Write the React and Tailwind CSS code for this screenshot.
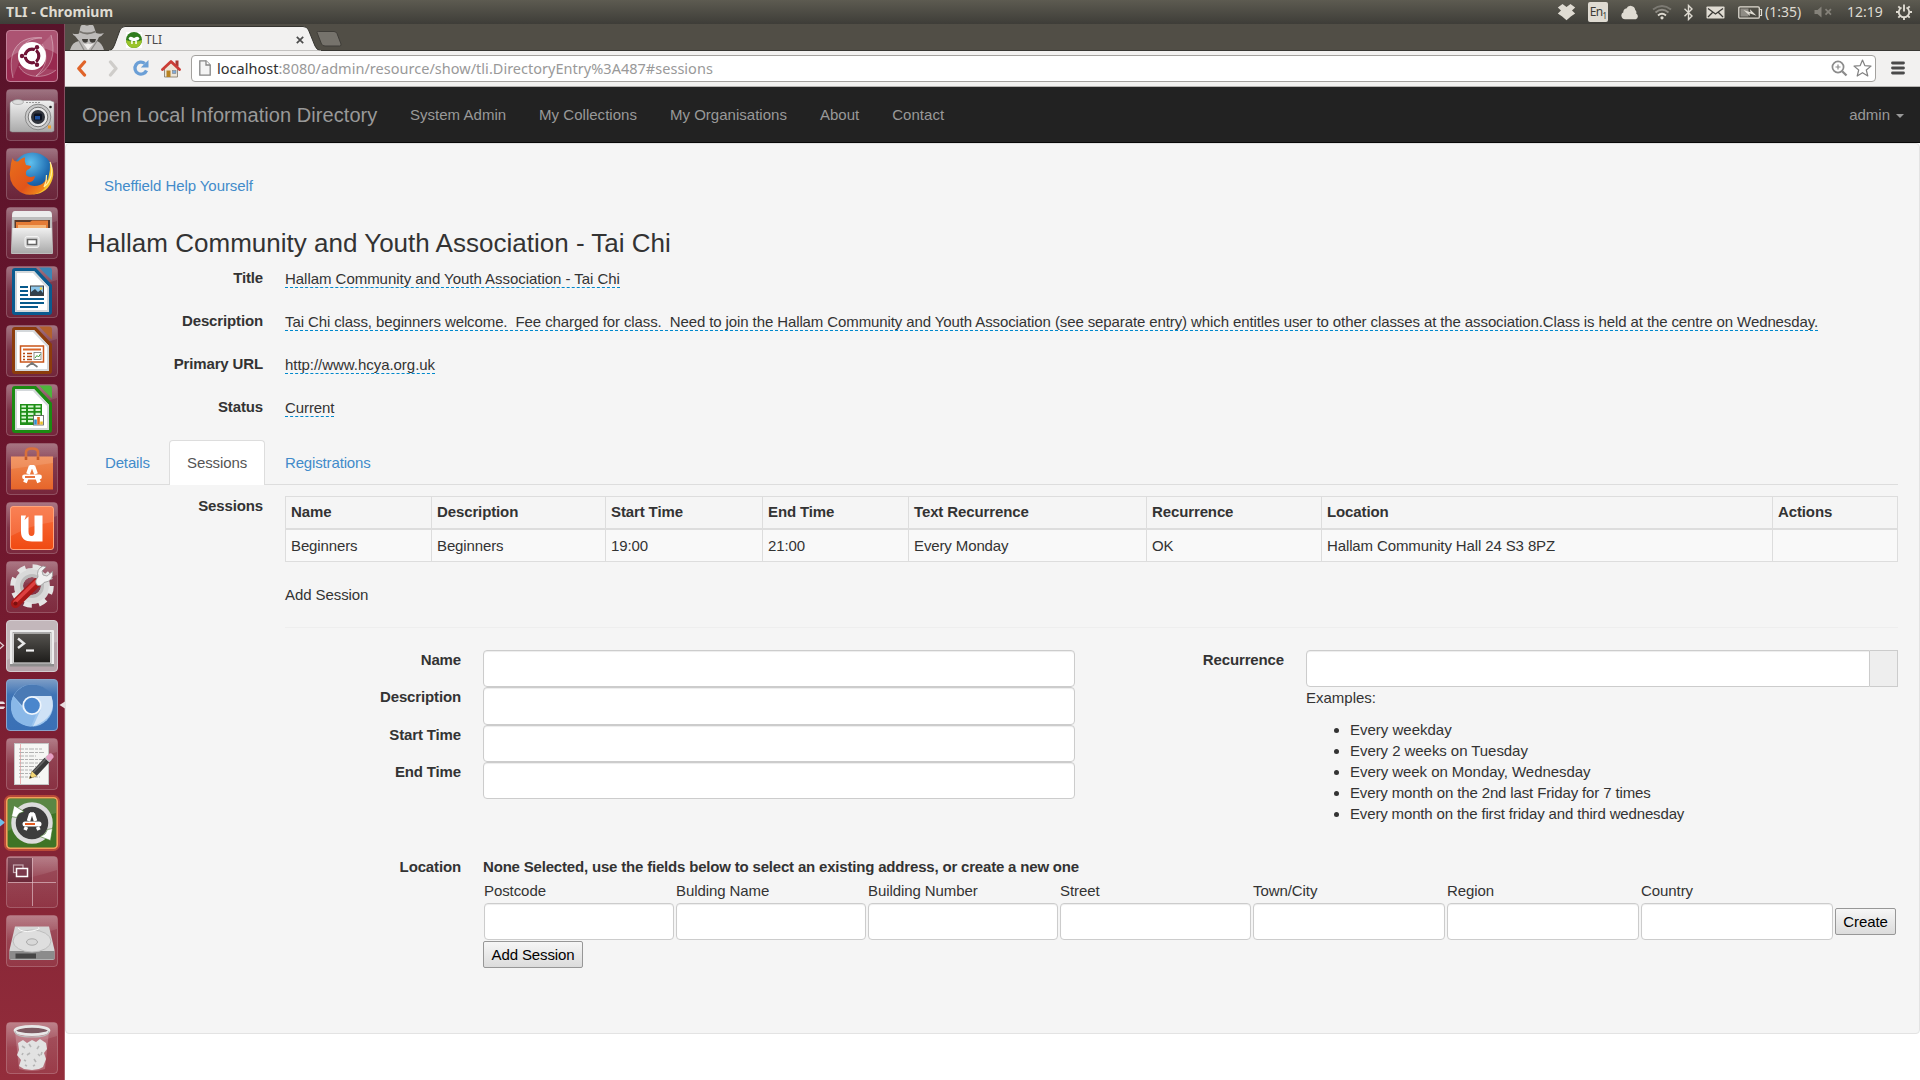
import React from "react";

/* ---------- Top panel ---------- */

function TopPanel() {
  return (
    <div className="flex h-6 shrink-0 items-center bg-linear-to-b from-[#5d5b51] to-[#3e3d38] font-['Noto_Sans',sans-serif] text-[14px] leading-6 text-[#dfdbd2]">
      <span className="ml-1.5 text-[14px] font-bold tracking-[0.05px] whitespace-nowrap">TLI - Chromium</span>
      <div className="ml-auto flex h-6 items-center">
        <svg width="19" height="18" viewBox="0 0 19 18" fill="#dfdbd2">
          <path d="M5.500 1 9.500 4 13.500 1 18.200 4.600 15 7.600 18.200 10.600 13.800 13.600 9.500 17.200 5.200 13.600 0.800 10.600 4 7.600 0.800 4.600Z" />
        </svg>
        <span className="ml-[12px] flex h-5 w-5 items-center justify-center overflow-hidden rounded-[2px] bg-[#dfdbd2] text-[12px] leading-5 tracking-[-0.7px] text-[#3c3b37]">
          En<span className="mt-2 text-[8px] leading-none">1</span>
        </span>
        <svg className="ml-[13px]" width="18" height="16" viewBox="0 0 18 16" fill="#dfdbd2">
          <path d="M4 15.200a3.700 3.700 0 0 1-1.600-7A3 3 0 0 1 5.400 4.600a4.600 4.600 0 0 1 8.800 1.400 3 3 0 0 1 1 3.400A3.200 3.200 0 0 1 14.800 15.200Z" />
        </svg>
        <svg className="ml-[13px]" width="20" height="16" viewBox="0 0 20 16" fill="none" strokeWidth="1.900">
          <path d="M1 5.500Q10-1.500 19 5.500" stroke="#7c7a73" />
          <path d="M3.500 8.500Q10 3.200 16.500 8.500" stroke="#8f8c85" />
          <path d="M6 11.500Q10 8.200 14 11.500" stroke="#dfdbd2" />
          <circle cx="10" cy="13.800" r="1.600" fill="#dfdbd2" />
        </svg>
        <svg className="ml-[11px]" width="11" height="17" viewBox="0 0 11 17" fill="none" stroke="#dfdbd2" strokeWidth="1.400">
          <path d="M1.500 4.800 9 12 5.500 15.500V1.500L9 5 1.500 12.200" />
        </svg>
        <svg className="ml-[12px]" width="19" height="13" viewBox="0 0 19 13">
          <rect x="0.500" y="0.500" width="18" height="12" rx="0.800" fill="#dfdbd2" />
          <path d="M2 2.500 9.500 8 17 2.500M2 11 6.500 6.500M17 11 12.500 6.500" fill="none" stroke="#3c3b37" strokeWidth="1.300" />
        </svg>
        <svg className="ml-[13px]" width="25" height="13" viewBox="0 0 25 13">
          <rect x="0.800" y="0.800" width="20.500" height="11.400" rx="1.200" fill="none" stroke="#dfdbd2" strokeWidth="1.300" />
          <path d="M22 3.500h1.500v6H22" fill="none" stroke="#dfdbd2" strokeWidth="1.200" />
          <rect x="2.500" y="2.500" width="8" height="8" fill="#8f8c85" />
          <path d="M5.500 4 12.500 6.200 12 3.200 18.500 9.800 11.500 7.300 12 10Z" fill="#dfdbd2" />
        </svg>
        <span className="ml-[2px] w-[38px] text-[14px] whitespace-nowrap">(1:35)</span>
        <svg className="ml-[11px]" width="19" height="12" viewBox="0 0 19 12">
          <path d="M0.500 4h3L7.500 0.500v11L3.500 8h-3Z" fill="#85827a" />
          <path d="M11.500 3.200 17 8.700M17 3.200 11.500 8.700" stroke="#85827a" strokeWidth="1.700" />
        </svg>
        <span className="ml-[14px] w-[36px] text-[14px] whitespace-nowrap">12:19</span>
        <svg className="mr-2 ml-[13px]" width="16" height="16" viewBox="0 0 16 16" fill="none" stroke="#dfdbd2">
          <path d="M5.500 3.500a5.200 5.200 0 1 0 5 0" strokeWidth="1.800" />
          <path d="M8 0.500v7" strokeWidth="1.900" />
          <path d="M0 8h2.500M13.500 8H16M2.300 2.300l1.800 1.800M13.700 2.300l-1.800 1.800M2.300 13.700l1.800-1.800M13.700 13.700l-1.800-1.800M8 13.500V16" strokeWidth="1.900" />
        </svg>
      </div>
    </div>
  );
}

/* ---------- Launcher ---------- */

function Gloss() {
  return (
    <>
      <rect x="0.500" y="0.500" width="51" height="51" rx="3.500" fill="url(#tile)" stroke="#ffffff" strokeOpacity="0.220" />
      <path d="M1 4Q1 1 4 1H48Q51 1 51 4V14Q26 22 1 26Z" fill="url(#gloss)" />
    </>
  );
}

function Tile({ children, base = true }) {
  return (
    <svg className="block shrink-0 overflow-visible" width="52" height="52" viewBox="0 0 52 52">
      {base && <Gloss />}
      {children}
    </svg>
  );
}

function Defs() {
  return (
    <svg width="0" height="0" className="absolute">
      <defs>
        <linearGradient id="tile" x1="0" y1="0" x2="0" y2="1">
          <stop offset="0" stopColor="#fff" stopOpacity="0.200" />
          <stop offset="1" stopColor="#fff" stopOpacity="0.070" />
        </linearGradient>
        <linearGradient id="gloss" x1="0" y1="0" x2="0" y2="1">
          <stop offset="0" stopColor="#fff" stopOpacity="0.260" />
          <stop offset="1" stopColor="#fff" stopOpacity="0" />
        </linearGradient>
        <linearGradient id="silver" x1="0" y1="0" x2="0" y2="1">
          <stop offset="0" stopColor="#f0f0f0" />
          <stop offset="1" stopColor="#aaaaaa" />
        </linearGradient>
        <linearGradient id="orange" x1="0" y1="0" x2="0" y2="1">
          <stop offset="0" stopColor="#f08a52" />
          <stop offset="1" stopColor="#e6652a" />
        </linearGradient>
        <linearGradient id="one" x1="0" y1="0" x2="0" y2="1">
          <stop offset="0" stopColor="#f9703e" />
          <stop offset="1" stopColor="#f04a12" />
        </linearGradient>
        <radialGradient id="globe" cx="0.450" cy="0.250" r="0.800">
          <stop offset="0" stopColor="#5fc0ee" />
          <stop offset="0.600" stopColor="#1c68ae" />
          <stop offset="1" stopColor="#123b7a" />
        </radialGradient>
        <linearGradient id="fox" x1="0" y1="0" x2="1" y2="1">
          <stop offset="0" stopColor="#e8701c" />
          <stop offset="0.600" stopColor="#e2541a" />
          <stop offset="1" stopColor="#f6a21c" />
        </linearGradient>
        <linearGradient id="screen" x1="0" y1="0" x2="0" y2="1">
          <stop offset="0" stopColor="#55534f" />
          <stop offset="1" stopColor="#1e1d1b" />
        </linearGradient>
        <linearGradient id="blueTile" x1="0" y1="0" x2="0" y2="1">
          <stop offset="0" stopColor="#7d9dc6" />
          <stop offset="0.300" stopColor="#3f74b5" />
          <stop offset="1" stopColor="#3a70b6" />
        </linearGradient>
      </defs>
    </svg>
  );
}

function Office({ frame, corner, children }) {
  return (
    <Tile>
      <path d="M9 2H30L46 19V46Q46 49 43 49H9Q6 49 6 46V5Q6 2 9 2Z" fill={frame} />
      <path d="M9 5H28L43 21V46H9Z" fill="#fff" />
      <path d="M10 6H27.500L42 21.500V45H10Z" fill="none" stroke="#d4d8db" strokeWidth="2" />
      <path d="M33 1.500H43Q46 1.500 46 4.500V14.500Z" fill={corner} />
      {children}
    </Tile>
  );
}

function Launcher() {
  return (
    <div className="flex w-[65px] shrink-0 flex-col gap-[7px] border-r border-[#ffffff40] bg-linear-to-b from-[#58132a] via-[#6d162d] via-45% to-[#932d3b] py-1.5 pl-1.5">
      <Defs />
      {/* Dash home */}
      <Tile base={false}>
        <rect x="0.500" y="0.500" width="51" height="51" rx="3.500" fill="#98294f" stroke="#c27f97" />
        <path d="M1 4Q1 1 4 1H48Q51 1 51 4V24Q26 8 1 30Z" fill="#fff" opacity="0.200" />
        <path d="M7 48C0 20 14 5 36 8C20 8 12 18 14 30M45 5C50 24 46 38 30 46C42 36 42 24 36 14M50 40C38 50 18 48 13 36" fill="#fff" fillOpacity="0.120" stroke="#fff" strokeOpacity="0.350" />
        <circle cx="26" cy="26" r="14" fill="#fff" />
        <circle cx="26" cy="26" r="6.800" fill="none" stroke="#6f1436" strokeWidth="3.200" />
        <path d="M26 26H15M26 26 31.500 16.500M26 26 31.500 35.500" stroke="#fff" strokeWidth="1.300" />
        <circle cx="26" cy="26" r="5" fill="#fff" />
        <circle cx="16" cy="26" r="2.200" fill="#6f1436" />
        <circle cx="31" cy="17.200" r="2.200" fill="#6f1436" />
        <circle cx="31" cy="34.800" r="2.200" fill="#6f1436" />
      </Tile>
      {/* Camera */}
      <Tile>
        <path d="M5 12.500 8 11.500H44L48 13V42L46 43H6L4 42V14Z" fill="url(#silver)" stroke="#8d8d8d" strokeWidth="0.500" />
        <ellipse cx="12" cy="13" rx="5.500" ry="2.500" fill="#ddd" stroke="#999" strokeWidth="0.600" />
        <path d="M20 13.500H35" stroke="#999" strokeDasharray="2 1" />
        <circle cx="32" cy="28" r="12.800" fill="#c9c9c9" stroke="#8a8a8a" />
        <circle cx="32" cy="28" r="9.800" fill="#e9e9e9" stroke="#777" />
        <circle cx="32" cy="28" r="7" fill="#30343c" />
        <rect x="28" y="24.500" width="8" height="7" rx="1.500" fill="#0c1220" />
        <rect x="29" y="27" width="5" height="3.500" fill="#1d4f9c" />
        <circle cx="44.500" cy="18" r="1.300" fill="#222" />
        <rect x="42" y="36.500" width="3" height="3" fill="#f0a030" />
      </Tile>
      {/* Firefox */}
      <Tile>
        <circle cx="26.500" cy="25" r="20.500" fill="url(#globe)" />
        <path d="M44 14Q49 22 46.500 31Q42 45.500 27 46.500Q38 42 40 32Q42 34 42.500 29Q44.500 22 44 14Z" fill="#f9c52c" />
        <path d="M6.500 10Q8 14 12 13.500Q17 9 19 9.500Q18 13 20 17L25 18Q25 20.500 21 22Q19 24 20 27Q23 30.500 29 28Q28 35 20.500 34.500Q26 40 34 37Q39 35 41 29Q43 41 31 45.500Q19 49.500 10.500 41Q1.500 33 4.500 20Q5 14 6.500 10Z" fill="url(#fox)" />
        <path d="M44 14Q47 20 45 28Q43 35 38 39Q41 33 40.500 27" fill="none" stroke="#fff0a0" strokeWidth="1.200" />
      </Tile>
      {/* Files */}
      <Tile>
        <path d="M9 4H43Q46 4 46 8L47 46Q47 47 46 47H6Q5 47 5 46L6 8Q6 4 9 4Z" fill="#bdbdbd" />
        <path d="M9 4H43Q46 4 46 10H6Q6 4 9 4Z" fill="#ececec" />
        <rect x="8.500" y="13" width="35.500" height="10" fill="#5b3a2a" />
        <path d="M10 15H24L26 13.500H42V22H10Z" fill="#e57c36" />
        <rect x="12" y="18" width="28" height="4" fill="#f5b577" />
        <path d="M6.500 21H45.500L46.500 46H5.500Z" fill="url(#silver)" />
        <rect x="19" y="29.500" width="14" height="11" rx="2" fill="#d9d9d9" stroke="#f3f3f3" />
        <rect x="21.500" y="32.500" width="9" height="5" fill="#fff" stroke="#666" strokeWidth="1.500" />
      </Tile>
      {/* Writer */}
      <Office frame="#0b5b8f" corner="#3c85b4">
        <path d="M14 21H22M14 25H22M14 29H22M14 33H38M14 37H38M14 41H32" stroke="#075a8c" strokeWidth="1.800" />
        <rect x="24.500" y="20" width="13" height="9.500" fill="#8cc6ea" stroke="#404040" />
        <path d="M25 29V26L29 23 32 26 34.500 24 37 27V29Z" fill="#30404c" />
        <circle cx="35" cy="22.500" r="1.300" fill="#f5d33c" />
      </Office>
      {/* Impress */}
      <Office frame="#8c3c0c" corner="#b3612c">
        <rect x="14.500" y="21" width="23" height="16" fill="#fff" stroke="#c9551a" strokeWidth="1.500" />
        <path d="M17 24.500H35" stroke="#d9662a" strokeWidth="2" />
        <path d="M17 28.500H19M17 31.500H19M17 34.500H19M21 28.500H26M21 31.500H26M21 34.500H26" stroke="#b54a15" strokeWidth="1.600" />
        <rect x="28" y="27.500" width="7" height="7" fill="#fff" stroke="#777" strokeWidth="0.800" />
        <path d="M29 33 31 30.500 32.500 32 34.500 29" fill="none" stroke="#3b9f35" />
        <path d="M26 37V39M26 38 20.500 42M26 38 31.500 42" stroke="#777" strokeWidth="1.600" />
      </Office>
      {/* Calc */}
      <Office frame="#1c8a12" corner="#4db33c">
        <rect x="14" y="20" width="22" height="21" fill="#1f8f18" />
        <path d="M15.500 22.500H20M22 22.500H27.500M29.500 22.500H34.500M15.500 26H20M22 26H27.500M29.500 26H34.500M15.500 29.800H20M22 29.800H27.500M29.500 29.800H34.500M15.500 33.500H20M22 33.500H27.500M15.500 37.200H20M22 37.200H27.500" stroke="#d6f5cf" strokeWidth="2.200" />
        <rect x="27.500" y="31.500" width="10" height="9.500" fill="#fff" stroke="#555" strokeWidth="0.800" />
        <path d="M29.500 40.500V35.500" stroke="#2f8ed0" strokeWidth="2.600" />
        <path d="M32.500 40.500V33" stroke="#e06d20" strokeWidth="2.600" />
        <path d="M35.500 40.500V37.500" stroke="#e8bf28" strokeWidth="2.600" />
      </Office>
      {/* Software centre */}
      <Tile>
        <path d="M20 17V9.500Q20 5.500 26 5.500T32 9.500V17" fill="none" stroke="#d9703a" strokeWidth="2.600" />
        <path d="M5 13.500H47V46.500H5Z" fill="url(#orange)" />
        <path d="M5 13.500H47V20L5 26Z" fill="#fff" opacity="0.120" />
        <path d="M20 17V13.500M32 17V13.500" stroke="#c45a28" strokeWidth="2.600" />
        <path d="M19 39.500 20.500 35.500M24 24H28M33 39.500 31.500 35.500M22 31 24.800 23M30 31 27.200 23" fill="none" stroke="#fff" strokeWidth="3.800" />
        <path d="M18.500 34H33.500" stroke="#fff" strokeWidth="4.800" strokeLinecap="round" />
        <path d="M19 34H29" stroke="#e6652a" strokeWidth="1.800" />
      </Tile>
      {/* Ubuntu One */}
      <Tile>
        <rect x="4.500" y="4.500" width="43" height="43" rx="2.500" fill="url(#one)" stroke="#ffa47c" />
        <path d="M5 5H47V20Q28 22 5 34Z" fill="#fff" opacity="0.120" />
        <path d="M15 13.500H20L18.500 18 22.500 14.500V29.500Q22.500 34 25.500 34Q28.500 34 28.500 30V13.500H36.500V39.500H26Q15 39.500 15 30Z" fill="#fff" />
      </Tile>
      {/* Settings */}
      <Tile>
        <g transform="translate(26 25)">
          <circle r="13.500" fill="none" stroke="#d9d9d9" strokeWidth="9" />
          <circle r="19.300" fill="none" stroke="#e4e4e4" strokeWidth="5" strokeDasharray="8 7.160" />
          <circle r="10.500" fill="none" stroke="#bdbdbd" strokeWidth="3" />
        </g>
        <path d="M9.500 42.500 31 21.500" stroke="#a81818" strokeWidth="9" strokeLinecap="round" />
        <path d="M9 41 30 20.500" stroke="#dd4040" strokeWidth="3.500" strokeLinecap="round" />
        <circle cx="9.500" cy="42.500" r="2" fill="#7c1010" />
        <path d="M31 24Q28 20 32 16Q30 8 37 5L40 6 36 10 37 14 41 15 46.500 10.500Q48 20 38 21.500Q35 26 31 24Z" fill="#f0f0f0" stroke="#999" strokeWidth="0.800" />
      </Tile>
      {/* Terminal */}
      <Tile base={false}>
        <path d="M-7 21.500-2.500 25.500-7 29.500" fill="none" stroke="#e2ccd2" strokeWidth="1.300" />
        <rect x="0.500" y="0.500" width="51" height="51" rx="3.500" fill="#b5a5ab" stroke="#d5ccd0" />
        <path d="M1 4Q1 1 4 1H48Q51 1 51 4V22Q26 26 1 40Z" fill="#fff" opacity="0.200" />
        <rect x="4" y="10" width="44" height="36" rx="1" fill="#eee" />
        <path d="M4 44H48V46.500H4Z" fill="#8e8e8e" />
        <rect x="7" y="12.500" width="38" height="31" fill="#fafafa" stroke="#999" strokeWidth="0.800" />
        <rect x="8" y="13.500" width="36" height="29" fill="url(#screen)" />
        <path d="M12 18.500 18 23.500 12 28" fill="none" stroke="#e8e8e8" strokeWidth="2.400" />
        <path d="M20 30.500H28" stroke="#f2f2f2" strokeWidth="2.200" />
      </Tile>
      {/* Chromium */}
      <Tile base={false}>
        <path d="M-6 23H-2.500L-1.500 24.500H-6ZM-6 28H-1.500L-2.500 29.500H-6Z" fill="#ecdfe2" stroke="#ecdfe2" />
        <path d="M53.500 26 59 22.500V29.500Z" fill="#e8dde0" />
        <rect x="0.500" y="0.500" width="51" height="51" rx="3.500" fill="url(#blueTile)" stroke="#8aa6cc" />
        <circle cx="26" cy="26.500" r="21" fill="#9cc5ee" />
        <path d="M7.500 17Q14 5.500 26 5.500Q40 5.500 46 17H26Q17 18 16.500 27Z" fill="#4a7ab5" />
        <path d="M26 17H45.500Q52 38 27 47.500L34.500 31Q37 22 26 17Z" fill="#cfe2f6" />
        <path d="M7.500 17 17.500 31Q22 37 30 35.500L25 47.500Q4 45 5 26Q5.500 20 7.500 17Z" fill="#8ab8e8" />
        <circle cx="26" cy="26.500" r="8.700" fill="#4a86cc" stroke="#eef5fc" strokeWidth="1.800" />
      </Tile>
      {/* Text editor */}
      <Tile>
        <rect x="8.500" y="5.500" width="34" height="41" fill="#f6f6f4" stroke="#c5c5c5" />
        <path d="M14.500 6V46" stroke="#e7a0a0" strokeWidth="0.800" />
        <path d="M13 11H36M13 14.500H38M13 18H30M13 21.500H38M13 25H34M13 28.500H30M13 32H26M13 35.500H30M13 39H34" stroke="#b2b2b2" strokeWidth="1" strokeDasharray="5 1 3 1" />
        <path d="M23.500 40.500 26 33 31 38Z" fill="#f2d675" stroke="#8b7330" strokeWidth="0.500" />
        <path d="M28.500 35.500 41 22" stroke="#3b3b3b" strokeWidth="6.500" />
        <path d="M27.500 34 40 20.800" stroke="#666" strokeWidth="1.500" />
        <path d="M41 22 43.500 19.500" stroke="#c9c9c9" strokeWidth="6.500" />
        <path d="M43.500 19.500 44.500 18.500" stroke="#e6a0c4" strokeWidth="6" strokeLinecap="round" />
        <path d="M23.500 40.500 24.300 38 26 39.500Z" fill="#222" />
      </Tile>
      {/* Software updater */}
      <Tile base={false}>
        <path d="M-6 21.500-1 25.500-6 29.500Z" fill="#6fc0ea" />
        <rect x="-0.500" y="-0.500" width="53" height="53" rx="5" fill="none" stroke="#f0703c" strokeOpacity="0.500" strokeWidth="3" />
        <rect x="0.800" y="0.800" width="50.400" height="50.400" rx="3.500" fill="#3f7426" stroke="#f3a25c" strokeWidth="1.600" />
        <path d="M2 4Q2 2 4 2H48Q50 2 50 4V16Q26 22 2 34Z" fill="#fff" opacity="0.140" />
        <circle cx="26" cy="26" r="18.500" fill="#3d3d3d" stroke="#dcdcdc" strokeWidth="4.500" />
        <path d="M5.500 19.500 8 8.500 18 14.500 13 16.500 10.500 20.500Z" fill="#fff" stroke="#3f7426" strokeWidth="0.600" />
        <path d="M46.500 31.500 44.500 43.500 34 39.500 39 37 41.500 32.500Z" fill="#fff" stroke="#3f7426" strokeWidth="0.600" />
        <path d="M19 33 20.500 30M24 17H28M33 33 31.500 30M22.500 24 24.800 16.500M29.500 24 27.200 16.500" fill="none" stroke="#fff" strokeWidth="3.600" />
        <path d="M19 27H33" stroke="#fff" strokeWidth="5" strokeLinecap="round" />
        <path d="M19 27H29" stroke="#e35b20" strokeWidth="2" />
      </Tile>
      {/* Workspace switcher */}
      <Tile>
        <rect x="2" y="2" width="24" height="24" fill="#3a0c1c" opacity="0.450" />
        <path d="M26.500 2V50M2 26.500H50" stroke="#e3c3cb" strokeOpacity="0.650" />
        <rect x="7.500" y="9" width="9.500" height="7.500" fill="none" stroke="#c7aab2" strokeWidth="1.200" />
        <rect x="10.500" y="12.500" width="11" height="8" fill="#7b3a4c" stroke="#fff" strokeWidth="1.500" />
      </Tile>
      {/* Disk */}
      <Tile>
        <path d="M9 11.500H43L48.500 35V44L47 45H5L3.500 44V35Z" fill="#d6d6d6" />
        <path d="M3.500 36H48.500V44.500H3.500Z" fill="#8b8b8b" />
        <path d="M9.500 38.500H30V43.500H9.500Z" fill="#454545" />
        <ellipse cx="26" cy="26" rx="19" ry="11" fill="#dedede" stroke="#bdbdbd" />
        <ellipse cx="26" cy="27" rx="5.500" ry="3.200" fill="#d8d8d8" stroke="#aaa" />
        <path d="M12 13Q16 18 26 16T32 12.500" fill="none" stroke="#f8f8f8" />
      </Tile>
      {/* Trash */}
      <div className="mt-auto">
        <Tile>
          <path d="M9 9 13 47Q26 51 39 47L43 9Z" fill="#e3b9c2" fillOpacity="0.350" />
          <path d="M12 21 17 18 21 21 26 18 30 20 34 17 40 21 41 27 38 31 40 37 37 45 33 47 26 48 18 47 13 44 15 38 11 33 13 28Z" fill="#e2e2e2" />
          <path d="M16 24 19 26M23 22 25 25M24 31 21 33M33 24 31 27M32 32 34 34M18 38 20 39M28 37 30 40M27 44 29 43M36 30 35 33M19 43 21 44M17 31 16 33" fill="none" stroke="#b5b5b5" strokeWidth="1.600" />
          <ellipse cx="26" cy="8.500" rx="17" ry="4.200" fill="#7d5a62" stroke="#e8e8e8" strokeWidth="2.800" />
          <path d="M9 9Q9 15 26 15T43 9" fill="none" stroke="#bcbcbc" strokeWidth="1.200" />
        </Tile>
      </div>
    </div>
  );
}

/* ---------- Browser chrome ---------- */

function TabStrip() {
  return (
    <div className="flex h-[27px] shrink-0 border-b border-[#383733] bg-[#514e46]">
      <svg className="mt-px ml-[5px]" width="34" height="25" viewBox="0 0 34 25">
        <path d="M0 25Q2 17 9 16L5 11Q3 10 2.500 8.500Q6 9.500 9 8.500L10.500 1.500Q12-1.500 15 0Q17 1 19 0Q23-1.500 24 2L26 8Q30 9.500 34 8Q32 11 29 12L27 16Q32 18 34 25Z" fill="#bdbbb9" />
        <path d="M9.500 6.500Q17 10.500 25.500 6.500" fill="none" stroke="#77746f" strokeWidth="1.800" />
        <path d="M12 14H18L17.500 17Q14 19 12.500 16ZM19.500 14H26L25 17Q21 19 19.800 16Z" fill="#3f3d39" />
        <path d="M13 18 18 25 24 18Q21 20 18 18.500Q15 20 13 18Z" fill="#efedeb" />
        <path d="M9 16 14 25M27 16 21 25" stroke="#8b8986" strokeWidth="1.200" />
      </svg>
      <div className="relative ml-[5px] h-[27px] w-[212px]">
        <svg className="absolute inset-0" width="212" height="27" viewBox="0 0 212 27">
          <path d="M0 27Q4 26 5.500 21L11 6Q12.500 2.500 16 2.500H194Q198 2.500 199.500 6L206 22Q207.500 26 212 27Z" fill="#f2f1f0" stroke="#35342f" strokeWidth="1" />
          <path d="M0 27H212" stroke="#f2f1f0" strokeWidth="1" />
        </svg>
        <div className="relative flex h-full items-center pt-[5px] pl-[17px]">
          <svg width="16" height="16" viewBox="0 0 16 16">
            <rect width="16" height="16" fill="#fff" />
            <circle cx="8" cy="8" r="8" fill="#2f7c1d" />
            <path d="M0 8a8 8 0 0 0 16 0Q8 11 0 8Z" fill="#9ac42a" />
            <path d="M2.500 6.500Q3.500 4 6 5L8 6 10 5Q12.500 4 13.500 6.500L12 8.500 10.800 8V12H9.300V9H6.700V12H5.200V8L4 8.500Z" fill="#fff" />
          </svg>
          <span className="ml-[3px] font-['Noto_Sans',sans-serif] text-[12px] text-[#4a4a4a]">TLI</span>
          <svg className="mr-[17px] ml-auto" width="8" height="8" viewBox="0 0 8 8">
            <path d="M0.800 0.800 7.200 7.200M7.200 0.800 0.800 7.200" stroke="#4d4d4d" strokeWidth="1.700" />
          </svg>
        </div>
      </div>
      <svg className="-ml-[5px] mt-[7px]" width="26" height="16" viewBox="0 0 26 16">
        <path d="M1 1.500Q0.500 0.500 2.500 0.500H18Q20 0.500 21 2.500L25 13Q25.500 15 23.500 15H9Q6.500 15 5.500 13Z" fill="#76736c" stroke="#3f3d38" />
      </svg>
    </div>
  );
}

function Toolbar() {
  return (
    <div className="flex h-9 shrink-0 items-center border-b border-[#b6b4b2] bg-[#f2f1f0] pb-px">
      <svg className="ml-[11px]" width="11" height="17" viewBox="0 0 11 17">
        <path d="M8.500 2 2.800 8.500 8.500 15" fill="none" stroke="#e0642a" strokeWidth="3.300" strokeLinecap="round" strokeLinejoin="round" />
      </svg>
      <svg className="ml-[21px]" width="11" height="17" viewBox="0 0 11 17">
        <path d="M2.500 2 8 8.500 2.500 15" fill="none" stroke="#cfcdca" strokeWidth="3.300" strokeLinecap="round" strokeLinejoin="round" />
      </svg>
      <svg className="ml-[13px]" width="18" height="18" viewBox="0 0 18 18">
        <path d="M14.500 11.500A6 6 0 1 1 12.800 4.500" fill="none" stroke="#6b9fd6" strokeWidth="3.300" />
        <path d="M16.500 1V8.500H8.800Z" fill="#6b9fd6" />
      </svg>
      <svg className="ml-[11px]" width="20" height="19" viewBox="0 0 20 19">
        <rect x="14.500" y="1.500" width="3" height="6" fill="#a63a32" />
        <path d="M3.500 9 10 3.500 16.500 9V18H3.500Z" fill="#ece5d8" stroke="#8b8273" strokeWidth="0.900" />
        <path d="M1.500 10.500 10 2.500 18.500 10.500" fill="none" stroke="#cb3d36" strokeWidth="2.800" strokeLinejoin="round" strokeLinecap="round" />
        <rect x="5.500" y="11.500" width="4" height="6.500" fill="#b8821f" />
        <rect x="11.500" y="11.500" width="3.500" height="3" fill="#7fa9d8" stroke="#777" strokeWidth="0.500" />
      </svg>
      <div className="ml-[10px] flex h-[27px] w-[1685px] items-center rounded-[4px] border border-[#a3a19e] bg-white pr-[3px] pl-[7px]">
        <svg width="12" height="16" viewBox="0 0 12 16">
          <path d="M0.800 0.800H7L11.200 5V15.200H0.800Z" fill="#f4f4f4" stroke="#858585" strokeWidth="1.300" />
          <path d="M7 0.800V5H11.200" fill="#fff" stroke="#858585" strokeWidth="1.300" />
        </svg>
        <span className="ml-[6px] font-['Noto_Sans',sans-serif] text-[14.500px] leading-5 tracking-[0.020px] whitespace-nowrap text-[#999]">
          <span className="text-[#303030]">localhost</span>:8080/admin/resource/show/tli.DirectoryEntry%3A487#sessions
        </span>
        <svg className="ml-auto" width="17" height="17" viewBox="0 0 17 17" fill="none" stroke="#8b8b8b">
          <circle cx="7" cy="7" r="5.600" strokeWidth="1.700" />
          <path d="M11.200 11.200 15.500 15.500" strokeWidth="2.300" />
          <path d="M4.500 7H9.500M7 4.500V9.500" strokeWidth="1.200" />
        </svg>
        <svg className="ml-[5px]" width="19" height="18" viewBox="0 0 19 18">
          <path d="M9.500 1 11.800 6.600 18 7.100 13.300 11 14.800 17 9.500 13.700 4.200 17 5.700 11 1 7.100 7.200 6.600Z" fill="none" stroke="#828282" strokeWidth="1.200" strokeLinejoin="round" />
        </svg>
      </div>
      <svg className="ml-[15px]" width="14" height="14" viewBox="0 0 14 14">
        <path d="M1.500 2H12.500M1.500 7H12.500M1.500 12H12.500" stroke="#4a4a4a" strokeWidth="2.800" strokeLinecap="round" />
      </svg>
    </div>
  );
}

/* ---------- Web page ---------- */

function Navbar() {
  return (
    <nav className="flex h-14 shrink-0 items-center border-b border-[#080808] bg-[#222] pl-[17px] text-[#999]">
      <span className="w-[328px] text-[20px] leading-6 tracking-[0.060px] whitespace-nowrap">Open Local Information Directory</span>
      <div className="flex gap-[33px] leading-[22px] tracking-[0.020px] whitespace-nowrap">
        <span>System Admin</span>
        <span>My Collections</span>
        <span>My Organisations</span>
        <span>About</span>
        <span>Contact</span>
      </div>
      <span className="ml-auto tracking-normal">admin</span>
      <svg className="mt-0.5 mr-4 ml-1.5" width="8" height="4" viewBox="0 0 8 4">
        <path d="M0 0H8L4 4Z" fill="#999" />
      </svg>
    </nav>
  );
}

const fields = [
  ["Title", "Hallam Community and Youth Association - Tai Chi", "tracking-[-0.035px]"],
  [
    "Description",
    "Tai Chi class, beginners welcome.\u00a0 Fee charged for class.\u00a0 Need to join the Hallam Community and Youth Association (see separate entry) which entitles user to other classes at the association.Class is held at the centre on Wednesday.",
    "tracking-[-0.106px]",
  ],
  ["Primary URL", "http://www.hcya.org.uk", "tracking-[-0.040px]"],
  ["Status", "Current", "tracking-[-0.090px]"],
];

const columns = ["Name", "Description", "Start Time", "End Time", "Text Recurrence", "Recurrence", "Location", "Actions"];
const session = ["Beginners", "Beginners", "19:00", "21:00", "Every Monday", "OK", "Hallam Community Hall 24 S3 8PZ", ""];
const examples = [
  ["Every weekday", "tracking-[0px]"],
  ["Every 2 weeks on Tuesday", "tracking-[-0.060px]"],
  ["Every week on Monday, Wednesday", "tracking-[-0.050px]"],
  ["Every month on the 2nd last Friday for 7 times", "tracking-[-0.135px]"],
  ["Every month on the first friday and third wednesday", "tracking-[-0.150px]"],
];
const address = ["Postcode", "Bulding Name", "Building Number", "Street", "Town/City", "Region", "Country"];

const inputStyle = "block w-full rounded-[4px] border border-[#ccc] bg-white shadow-[inset_0_1px_1px_rgba(0,0,0,0.075)] outline-none";
const buttonStyle =
  "shrink-0 h-[27px] rounded-[2px] border border-[#979797] bg-linear-to-b from-[#f6f6f6] to-[#dcdcdc] text-black leading-[24px] whitespace-nowrap tracking-[-0.12px]";
const labelStyle = "w-[176px] shrink-0 text-right font-bold tracking-[-0.140px]";

function SessionsTable() {
  return (
    <div className="mt-px grid w-[1613px] grid-cols-[146px_174px_157px_146px_238px_175px_451px_1fr] border border-[#ddd]">
      {columns.map((c) => (
        <div key={c} className="h-[33px] border-r border-b-2 border-[#ddd] pt-1 pl-[5px] font-bold tracking-[-0.120px] nth-[8]:border-r-0">
          {c}
        </div>
      ))}
      {session.map((c, i) => (
        <div key={i} className="h-[31px] border-r border-[#ddd] bg-[#f9f9f9] pt-[5px] pl-[5px] tracking-[-0.120px] last:border-r-0">
          {c}
        </div>
      ))}
    </div>
  );
}

function Page() {
  return (
    <div className="flex h-[891px] flex-col rounded-[4px] border border-[#e3e3e3] bg-[#f5f5f5] pr-[21px] pl-[21px]">
      <a className="mt-[31px] ml-[17px] text-[#428bca]">Sheffield Help Yourself</a>
      <h3 className="mt-[31px] text-[26px] leading-[30px] tracking-[0.010px]">Hallam Community and Youth Association - Tai Chi</h3>
      <div className="mt-[9px] flex flex-col">
        {fields.map(([label, value, spacing]) => (
          <div key={label} className="flex h-[43px]">
            <label className={labelStyle}>{label}</label>
            <div className="ml-[22px] pt-px whitespace-nowrap">
              <span className={"border-b border-dashed border-[#08c] " + spacing}>{value}</span>
            </div>
          </div>
        ))}
      </div>

      <div className="mt-px flex h-[45px] border-b border-[#ddd] tracking-[-0.150px] text-[#428bca]">
        <a className="w-[82px] pt-3 pl-[18px]">Details</a>
        <a className="-mb-px w-[96px] rounded-t-[4px] border border-b-0 border-[#ddd] bg-white pt-[11px] pl-[17px] tracking-[-0.080px] text-[#555]">Sessions</a>
        <a className="pt-3 pl-5">Registrations</a>
      </div>

      <div className="mt-[10px] flex">
        <label className={labelStyle + " mr-[22px]"}>Sessions</label>
        <div className="flex w-[1613px] flex-col">
          <SessionsTable />
          <p className="mt-[22px]">Add Session</p>
          <hr className="mt-[21px] border-t border-[#eee]" />

          <div className="mt-[22px] flex h-[175px] justify-between">
            <div className="flex w-[790px] flex-col">
              {["Name", "Description", "Start Time", "End Time"].map((l) => (
                <div key={l} className="flex h-[37.350px]">
                  <label className={labelStyle + " mr-[22px] leading-5"}>{l}</label>
                  <input className={inputStyle + " h-[37.350px]"} />
                </div>
              ))}
            </div>
            <div className="flex">
              <label className="mr-[22px] leading-5 font-bold tracking-[-0.140px]">Recurrence</label>
              <div className="w-[592px]">
                <div className="flex h-[37px]">
                  <input className={inputStyle + " h-[37px] rounded-r-none"} />
                  <span className="h-[37px] w-[28px] shrink-0 border border-l-0 border-[#ccc] bg-[#eee]" />
                </div>
                <p className="tracking-normal">Examples:</p>
                <ul className="mt-[10px] list-disc pl-[44px] leading-[21px]">
                  {examples.map(([text, spacing]) => (
                    <li key={text} className={spacing}>
                      {text}
                    </li>
                  ))}
                </ul>
              </div>
            </div>
          </div>

          <div className="mt-[31px] flex">
            <label className={labelStyle + " mr-[22px]"}>Location</label>
            <div className="flex flex-col">
              <p className="font-bold tracking-[-0.185px]">None Selected, use the fields below to select an existing address, or create a new one</p>
              <div className="mt-[2px] ml-px grid grid-cols-[190px_190px_190px_191px_192px_192px_192px_61px] items-end gap-x-[2px]">
                {address.map((a) => (
                  <div key={a}>
                    <div className="leading-[22px]">{a}</div>
                    <input className={inputStyle + " mt-px h-[37px]"} />
                  </div>
                ))}
                <button className={buttonStyle + " mb-[5px]"}>Create</button>
              </div>
              <button className={buttonStyle + " mt-px w-[100px]"}>Add Session</button>
            </div>
          </div>
        </div>
      </div>
    </div>
  );
}

export default function App() {
  return (
    <div className="flex h-[1080px] w-[1920px] flex-col overflow-hidden bg-white">
      <TopPanel />
      <div className="flex grow">
        <Launcher />
        <div className="flex w-[1855px] flex-col">
          <TabStrip />
          <Toolbar />
          <div className="flex flex-col bg-white font-['Liberation_Sans',Arial,sans-serif] text-[15px] leading-[22px] tracking-[-0.080px] text-[#333]">
            <Navbar />
            <Page />
          </div>
        </div>
      </div>
    </div>
  );
}
